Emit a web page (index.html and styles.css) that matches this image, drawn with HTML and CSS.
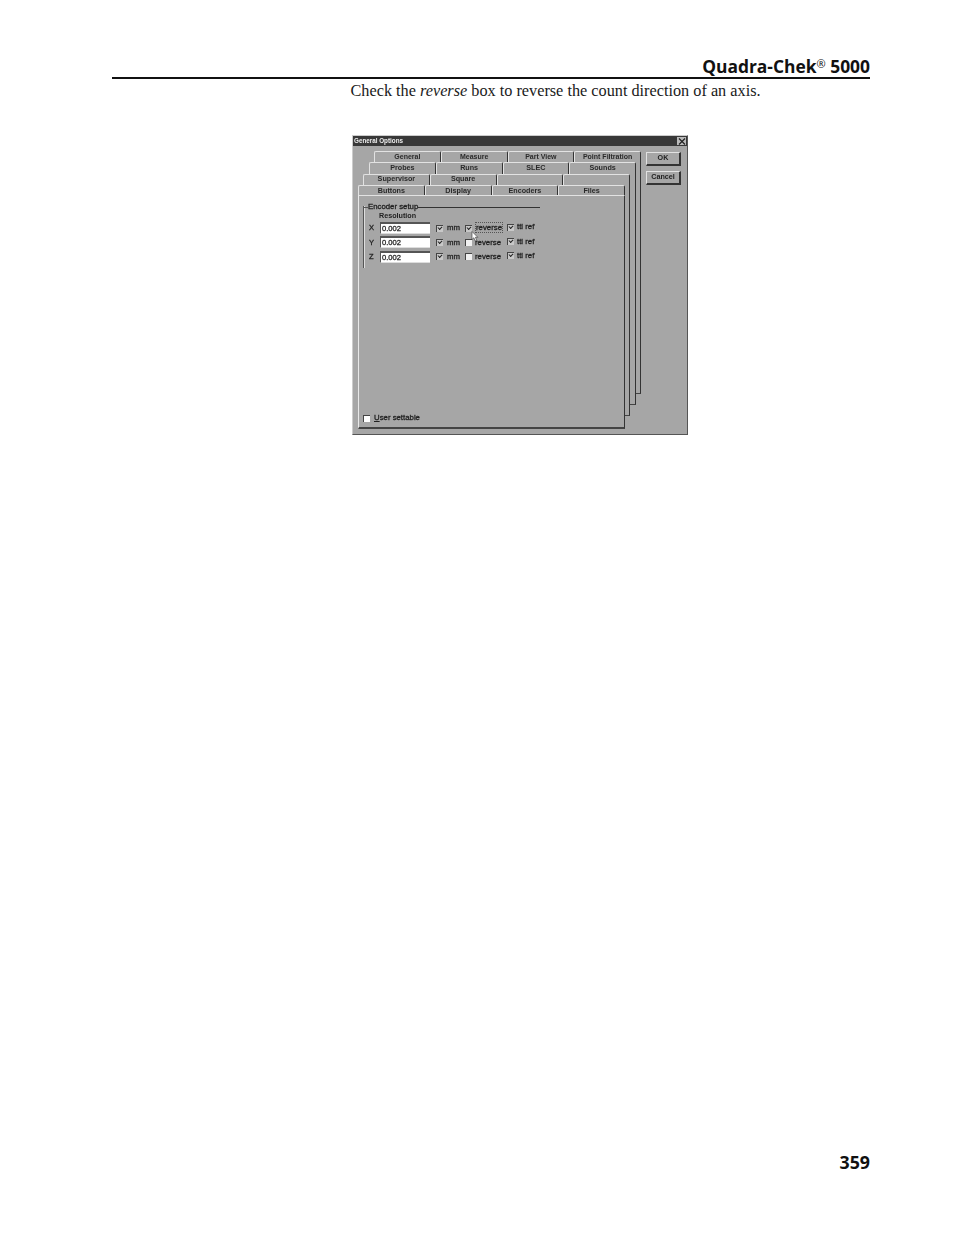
FILE: index.html
```html
<!DOCTYPE html>
<html lang="en">
<head>
<meta charset="utf-8">
<title>Quadra-Chek 5000 - page 359</title>
<link rel="stylesheet" href="styles.css">
</head>
<body>
<div class="page">
  <header class="head">
    <div class="head-title">Quadra-Chek<sup class="reg">®</sup> 5000</div>
  </header>
  <main class="content">
    <p class="copy">Check the <em>reverse</em> box to reverse the count direction of an axis.</p>
    <div class="dialog">
      <div class="titlebar"><span>General Options</span><span class="close"><svg width="8" height="7" viewBox="0 0 8 7"><path d="M1 0.5L7 6.5M7 0.5L1 6.5" stroke="#222" stroke-width="1.2" fill="none"/></svg></span></div>
      <div class="dlg-body">
        <div class="sheet">
          <div class="layer layer3"></div>
          <div class="layer layer2"></div>
          <div class="layer layer1"></div>
          <div class="tabrow r1"><div class="tab">General</div><div class="tab">Measure</div><div class="tab">Part View</div><div class="tab">Point Filtration</div></div>
          <div class="tabrow r2"><div class="tab">Probes</div><div class="tab">Runs</div><div class="tab">SLEC</div><div class="tab">Sounds</div></div>
          <div class="tabrow r3"><div class="tab">Supervisor</div><div class="tab">Square</div><div class="tab"></div><div class="tab"></div></div>
          <div class="tabrow r4"><div class="tab">Buttons</div><div class="tab">Display</div><div class="tab">Encoders</div><div class="tab">Files</div></div>
          <div class="panel">
            <div class="group">
              <div class="legend"><span>Encoder setup</span><i class="legend-line"></i></div>
              <div class="res">Resolution</div>
              <div class="axis"><span class="ax">X</span><span class="field">0.002</span><span class="cb on"></span><span class="lbl mm">mm</span><span class="cb on"></span><span class="lbl rev focus">reverse</span><span class="cb on up"></span><span class="lbl ttl up">ttl ref</span></div>
              <div class="axis"><span class="ax">Y</span><span class="field">0.002</span><span class="cb on"></span><span class="lbl mm">mm</span><span class="cb"></span><span class="lbl rev">reverse</span><span class="cb on up"></span><span class="lbl ttl up">ttl ref</span></div>
              <div class="axis"><span class="ax">Z</span><span class="field">0.002</span><span class="cb on"></span><span class="lbl mm">mm</span><span class="cb"></span><span class="lbl rev">reverse</span><span class="cb on up"></span><span class="lbl ttl up">ttl ref</span></div>
              <svg class="cursor" width="8" height="11" viewBox="0 0 8 11"><path d="M1 0.5V8.5L2.8 6.8L4.4 10L5.8 9.3L4.3 6.3H6.8Z" fill="#fff" stroke="#333" stroke-width="0.6"/></svg>
            </div>
            <div class="user"><span class="cb"></span><span class="lbl"><u>U</u>ser settable</span></div>
          </div>
        </div>
        <div class="buttons">
          <div class="btn">OK</div>
          <div class="btn">Cancel</div>
        </div>
      </div>
    </div>
  </main>
  <footer class="foot">359</footer>
</div>
</body>
</html>
```
FILE: styles.css
```css
html, body { margin: 0; padding: 0; background: #fff; }
.page { width: 954px; height: 1235px; position: relative; display: flex; flex-direction: column; box-sizing: border-box; padding: 56px 84px 0 112px; color: #111; }
.head { border-bottom: 2px solid #111; height: 21px; text-align: right; }
.head-title { font: 700 17.4px/20px "Open Sans", sans-serif; }
.reg { font-size: 11px; line-height: 0; font-weight: 400; vertical-align: 5px; }
.content { flex: 1; padding-left: 239px; }
.copy { margin: 2px 0 0 -0.5px; font: 400 16.25px/20px "Liberation Serif", serif; color: #1a1a1a; }
.dialog { margin: 34px 0 0 1px; width: 336px; height: 300px; box-sizing: border-box; background: #a6a6a6; border: 1px solid #555; border-left-color: #ccc; border-top-color: #ccc; font: 700 7.2px/1 "Liberation Sans", sans-serif; color: #222; filter: blur(0.35px); }
.titlebar { height: 10px; background: #383838; color: #eee; display: flex; justify-content: space-between; align-items: center; padding: 0 1px; line-height: 10px; font-size: 6.3px; }
.close { width: 9px; height: 8px; background: #bbb; display: flex; align-items: center; justify-content: center; }
.close svg { display: block; }
.dlg-body { display: flex; padding: 5px 6px 0 5px; }
.sheet { position: relative; width: 288px; }
.layer { position: absolute; width: 267px; background: #a6a6a6; border-right: 1px solid #333; border-bottom: 1px solid #444; box-sizing: border-box; }
.layer1 { left: 5px; top: 30px; height: 235px; }
.layer2 { left: 11px; top: 20px; height: 234px; }
.layer3 { left: 16px; top: 10px; height: 233px; }
.tabrow { display: flex; width: 267px; position: relative; }
.r1 { margin-left: 16px; height: 11px; z-index: 1; }
.r2 { margin-left: 11px; height: 12px; z-index: 2; }
.r3 { margin-left: 5px; height: 11px; z-index: 3; }
.r4 { margin-left: 0; height: 10px; z-index: 4; }
.tab { flex: 1; box-sizing: border-box; background: #a6a6a6; border-top: 1px solid #e2e2e2; border-left: 1px solid #e2e2e2; border-right: 1px solid #333; border-radius: 2px 2px 0 0; text-align: center; line-height: 10px; color: #2a2a2a; white-space: nowrap; }
.r1 .tab { font-size: 7px; line-height: 9px; }
.r3 .tab { line-height: 8px; }
.panel { position: relative; z-index: 5; width: 267px; height: 234px; box-sizing: border-box; background: #a6a6a6; border-top: 1px solid #e2e2e2; border-left: 1px solid #e8e8e8; border-right: 1px solid #333; border-bottom: 2px solid #444; display: flex; flex-direction: column; justify-content: space-between; padding: 10px 0 5px 4px; }
.group { position: relative; width: 176px; height: 62px; border-left: 1px solid #555; box-shadow: inset 1px 0 0 #ddd; }
.legend { display: flex; align-items: center; height: 0; margin: 1px 0 0 4px; font-size: 7.8px; font-weight: 400; -webkit-text-stroke: 0.3px #222; }
.legend span { padding: 0; line-height: 1; }
.legend-line { flex: 1; height: 1px; background: #333; }
.legend::before { content: ""; width: 4px; height: 1px; background: #555; margin-left: -4px; }
.res { padding: 6px 0 0 15px; height: 8px; line-height: 6px; }
.axis { display: flex; align-items: center; height: 14.3px; font-size: 7.8px; font-weight: 400; -webkit-text-stroke: 0.3px #222; }
.ax { width: 16px; padding-left: 5px; box-sizing: border-box; font-size: 7.5px; font-weight: 400; }
.field { width: 50px; height: 12px; box-sizing: border-box; background: #fff; border-top: 2px solid #555; border-left: 1px solid #555; border-bottom: 1px solid #ddd; padding-left: 1px; line-height: 9px; font-size: 7.6px; color: #333; margin-right: 6px; }
.cb { display: inline-block; width: 7px; height: 7px; box-sizing: border-box; background: #f0f0f0; border-top: 1px solid #444; border-left: 1px solid #444; }
.cb.on { background: #c8c8c8; position: relative; }
.cb.on::after { content: ""; position: absolute; left: 1px; top: 0; width: 3px; height: 2px; border-left: 1px solid #222; border-bottom: 1px solid #222; transform: rotate(-45deg); }
.up { position: relative; top: -1px; }
.lbl { font-size: 7.8px; font-weight: 400; -webkit-text-stroke: 0.3px #222; white-space: nowrap; }
.mm { width: 22px; padding-left: 4px; box-sizing: border-box; }
.rev { width: 35px; padding-left: 3px; box-sizing: border-box; }
.ttl { padding-left: 3px; }
.focus { height: 11px; line-height: 11px; outline: 1px dotted #555; outline-offset: -1px; width: 28px; padding-left: 1px; margin: 0 4px 0 3px; position: relative; top: -1px; }
.cursor { position: absolute; left: 107px; top: 25px; }
.user { display: flex; align-items: center; gap: 4px; }
.user .cb { background: #fff; }
.buttons { display: flex; flex-direction: column; gap: 5px; margin-top: 1px; }
.btn { width: 35px; height: 14px; box-sizing: border-box; background: #a6a6a6; border-top: 1px solid #e2e2e2; border-left: 1px solid #e2e2e2; border-right: 2px solid #333; border-bottom: 2px solid #333; text-align: center; line-height: 10px; }
.foot { position: absolute; right: 84px; top: 1152px; font: 700 17.8px/20px "Open Sans", sans-serif; }
```
